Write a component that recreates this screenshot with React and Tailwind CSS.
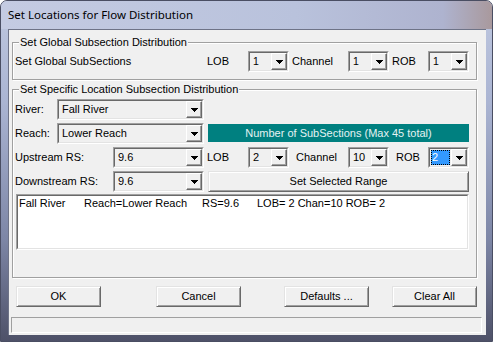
import React from "react";

function Arrow() {
  return (
    <svg width="7" height="4" viewBox="0 0 7 4" shapeRendering="crispEdges">
      <rect x="0" y="0" width="7" height="1" fill="#000" />
      <rect x="1" y="1" width="5" height="1" fill="#000" />
      <rect x="2" y="2" width="3" height="1" fill="#000" />
      <rect x="3" y="3" width="1" height="1" fill="#000" />
    </svg>
  );
}

function Combo({ w, value, selected }) {
  return (
    <div className={`${w} h-[21px] shrink-0 border border-t-[#a0a0a0] border-l-[#a0a0a0] border-b-white border-r-white`}>
      <div className="h-full flex border border-t-[#696969] border-l-[#696969] border-b-[#e3e3e3] border-r-[#e3e3e3] bg-[#f0f0f0]">
        {selected ? (
          <div className="flex-1 p-[1px] flex">
            <div className="flex-1 bg-[#3399ff] text-white outline outline-1 outline-dotted outline-black -outline-offset-1 leading-[15px] pl-[1px]">
              {value}
            </div>
          </div>
        ) : (
          <div className="flex-1 pl-[3px] leading-[17px] overflow-hidden whitespace-nowrap">{value}</div>
        )}
        <div className="w-[16px] h-full shrink-0 flex items-center justify-center border border-t-white border-l-white border-b-[#696969] border-r-[#696969] shadow-[inset_-1px_-1px_0_#a0a0a0] bg-[#f0f0f0]">
          <Arrow />
        </div>
      </div>
    </div>
  );
}

function Btn({ w, children, cls = "" }) {
  return (
    <div className={`${w} h-[21px] shrink-0 flex items-center justify-center border border-t-[#e3e3e3] border-l-[#e3e3e3] border-b-[#696969] border-r-[#696969] shadow-[inset_1px_1px_0_#fff,inset_-1px_-1px_0_#a0a0a0] bg-[#f0f0f0] ${cls}`}>
      {children}
    </div>
  );
}

export default function App() {
  return (
    <div className="w-[493px] h-[342px] overflow-hidden bg-white">
      <div className="w-[493px] h-[342px] rounded-t-[7px] border border-[#4a4e63] bg-[linear-gradient(180deg,#bfc8e0_0%,#aab4d2_30%,#7d86a6_70%,#4e5168_100%)] flex flex-col font-['Liberation_Sans',Arial,sans-serif] text-[10.5px] text-black">
        <div className="h-[28px] shrink-0 flex items-center pl-[7px] bg-[linear-gradient(90deg,#c4cbe2_0%,#b9c2dc_60%,#aeb3cf_90%,#a9999d_100%)] rounded-t-[6px]">
          <span className="font-['Noto_Sans',sans-serif] text-[11.5px] text-black mt-[-1px]">Set Locations for Flow Distribution</span>
        </div>
        <div className="ml-[7px] w-[478px] h-[306px] bg-[#f0f0f0] border-t border-l border-[#6e7387] flex flex-col">
          {/* Group 1 */}
          <fieldset className="ml-[3px] mt-[5px] w-[465px] border border-[#a0a0a0] shadow-[inset_1px_1px_0_#fff,1px_1px_0_#fff] pb-[7px]">
            <legend className="ml-[6px] px-[1px] leading-[14px] h-[14px] bg-[#f0f0f0] text-[11px]">Set Global Subsection Distribution</legend>
            <div className="flex items-center mt-[2px] pl-[2px]">
              <span className="w-[192px] shrink-0 text-[11px]">Set Global SubSections</span>
              <span className="w-[41px] shrink-0 text-[11px]">LOB</span>
              <Combo w="w-[41px]" value="1" />
              <span className="ml-[3px] w-[56px] shrink-0 text-[11px]">Channel</span>
              <Combo w="w-[41px]" value="1" />
              <span className="ml-[3px] w-[36px] shrink-0 text-[11px]">ROB</span>
              <Combo w="w-[41px]" value="1" />
            </div>
          </fieldset>

          {/* Group 2 */}
          <fieldset className="ml-[3px] mt-[2px] w-[465px] border border-[#a0a0a0] shadow-[inset_1px_1px_0_#fff,1px_1px_0_#fff] pb-[27px] text-[11px]">
            <legend className="ml-[6px] px-[1px] leading-[14px] h-[14px] bg-[#f0f0f0]">Set Specific Location Subsection Distribution</legend>
            <div className="flex items-center mt-[3px] pl-[2px]">
              <span className="w-[42px] shrink-0">River:</span>
              <Combo w="w-[147px]" value="Fall River" />
            </div>
            <div className="flex items-start mt-[3px] pl-[2px]">
              <span className="w-[42px] shrink-0 leading-[21px]">Reach:</span>
              <Combo w="w-[147px]" value="Lower Reach" />
              <div className="ml-[4px] mt-[1px] w-[261px] h-[18px] bg-[#008080] text-[#e4f2f2] flex items-center justify-center">
                Number of SubSections (Max 45 total)
              </div>
            </div>
            <div className="flex items-center mt-[3px] pl-[2px]">
              <span className="w-[98px] shrink-0">Upstream RS:</span>
              <Combo w="w-[91px]" value="9.6" />
              <span className="ml-[3px] w-[41px] shrink-0">LOB</span>
              <Combo w="w-[41px]" value="2" />
              <span className="ml-[7px] w-[52px] shrink-0">Channel</span>
              <Combo w="w-[41px]" value="10" />
              <span className="ml-[7px] w-[32px] shrink-0">ROB</span>
              <Combo w="w-[41px]" value="2" selected />
            </div>
            <div className="flex items-center mt-[3px] pl-[2px]">
              <span className="w-[98px] shrink-0">Downstream RS:</span>
              <Combo w="w-[91px]" value="9.6" />
              <Btn w="ml-[4px] w-[261px]">Set Selected Range</Btn>
            </div>
            <div className="ml-[3px] mt-[2px] w-[453px] h-[56px] border border-t-[#a0a0a0] border-l-[#a0a0a0] border-b-white border-r-white">
              <div className="h-full bg-white border border-t-[#696969] border-l-[#696969] border-b-[#e3e3e3] border-r-[#e3e3e3] pl-[1px] pt-[1px] whitespace-nowrap leading-[13px]">
                <span className="inline-block w-[65px]">Fall River</span>
                <span className="inline-block w-[118px]">Reach=Lower Reach</span>
                <span className="inline-block w-[55px]">RS=9.6</span>
                <span>LOB= 2 Chan=10 ROB= 2</span>
              </div>
            </div>
          </fieldset>

          {/* Buttons */}
          <div className="flex mt-[8px] pl-[7px] text-[11px]">
            <Btn w="w-[85px]">OK</Btn>
            <Btn w="ml-[55px] w-[85px]">Cancel</Btn>
            <Btn w="ml-[43px] w-[85px]">Defaults ...</Btn>
            <Btn w="ml-[23px] w-[85px]">Clear All</Btn>
          </div>

          {/* Status bar */}
          <div className="ml-[2px] mt-[10px] w-[471px] h-[16px] border border-t-[#a0a0a0] border-l-[#a0a0a0] border-b-white border-r-white" />
        </div>
      </div>
    </div>
  );
}
